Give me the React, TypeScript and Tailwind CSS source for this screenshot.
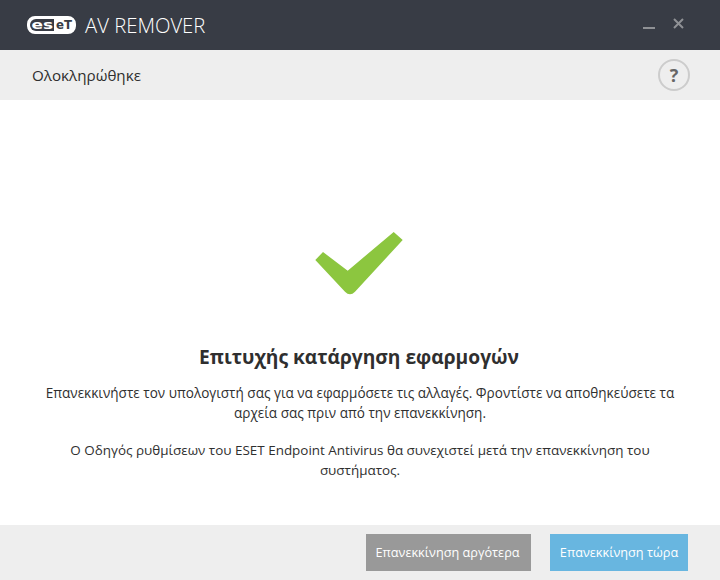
export default function App() {
  return (
    <div className="w-[720px] h-[580px] flex flex-col bg-white font-['Open_Sans',sans-serif] text-[#2f2f2f]">
      <header className="h-[50px] shrink-0 bg-[#383c45] flex items-center pl-[27px] pr-[36px]">
        <svg width="49" height="18" viewBox="0 0 49 18" className="mr-[9px]">
          <rect x="1" y="1" width="47" height="16" rx="7" fill="#fff" stroke="#fff" strokeWidth="2" />
          <path d="M9 3 H27 V15 H9 A6 6 0 0 1 9 3Z" fill="#383c45" />
          <text x="4.5" y="13.2" fontFamily="'DejaVu Sans',sans-serif" fontWeight="700" fontSize="12" fill="#fff" textLength="21.5" lengthAdjust="spacingAndGlyphs">es</text>
          <text x="29" y="13" fontFamily="'DejaVu Sans',sans-serif" fontWeight="700" fontSize="11.5" fill="#383c45" textLength="16" lengthAdjust="spacingAndGlyphs">eT</text>
        </svg>
        <span className="text-[20.3px] font-light text-white leading-none">AV REMOVER</span>
        <div className="ml-auto flex items-center gap-[18px] -mt-[3px]">
          <svg width="12" height="12" viewBox="0 0 12 12" className="mt-[4px]"><rect y="7" width="12" height="2" fill="#8f9195" /></svg>
          <svg width="11" height="11" viewBox="0 0 11 11"><path d="M1 1 L10 10 M10 1 L1 10" stroke="#8f9195" strokeWidth="2" /></svg>
        </div>
      </header>
      <div className="h-[50px] shrink-0 bg-[#eeeeee] flex items-center justify-between pl-[32px] pr-[30px]">
        <span className="text-[15.2px]">Ολοκληρώθηκε</span>
        <div className="w-[32px] h-[32px] rounded-full border-2 border-[#cccccc] flex items-center justify-center text-[#666666] text-[18px] font-bold leading-none">?</div>
      </div>
      <main className="flex-1 flex flex-col items-center pt-[132px] px-[40px] text-center">
        <svg width="88" height="64" viewBox="0 0 88 64" className="-translate-x-[1px]">
          <path d="M0.3 28 L8 20 L32.7 38.7 L78.7 0 L87.7 8 L40 59.7 Q35 65 30 59.7 Z" fill="#8cc63f" />
        </svg>
        <h1 className="mt-[49px] text-[19.2px] font-bold leading-[24px] -translate-x-[1px]">Επιτυχής κατάργηση εφαρμογών</h1>
        <p className="mt-[14px] text-[13.55px] leading-[20px]">Επανεκκινήστε τον υπολογιστή σας για να εφαρμόσετε τις αλλαγές. Φροντίστε να αποθηκεύσετε τα αρχεία σας πριν από την επανεκκίνηση.</p>
        <p className="mt-[17px] text-[13.45px] leading-[20px]">Ο Οδηγός ρυθμίσεων του ESET Endpoint Antivirus θα συνεχιστεί μετά την επανεκκίνηση του συστήματος.</p>
      </main>
      <footer className="h-[55px] shrink-0 bg-[#eeeeee] flex items-start justify-end gap-[19px] pt-[9px] pr-[32px]">
        <button className="h-[37px] w-[165px] bg-[#999999] text-white text-[12.7px] pr-[2px]">Επανεκκίνηση αργότερα</button>
        <button className="h-[37px] w-[138px] bg-[#68b6e0] text-white text-[12.7px]">Επανεκκίνηση τώρα</button>
      </footer>
    </div>
  );
}
